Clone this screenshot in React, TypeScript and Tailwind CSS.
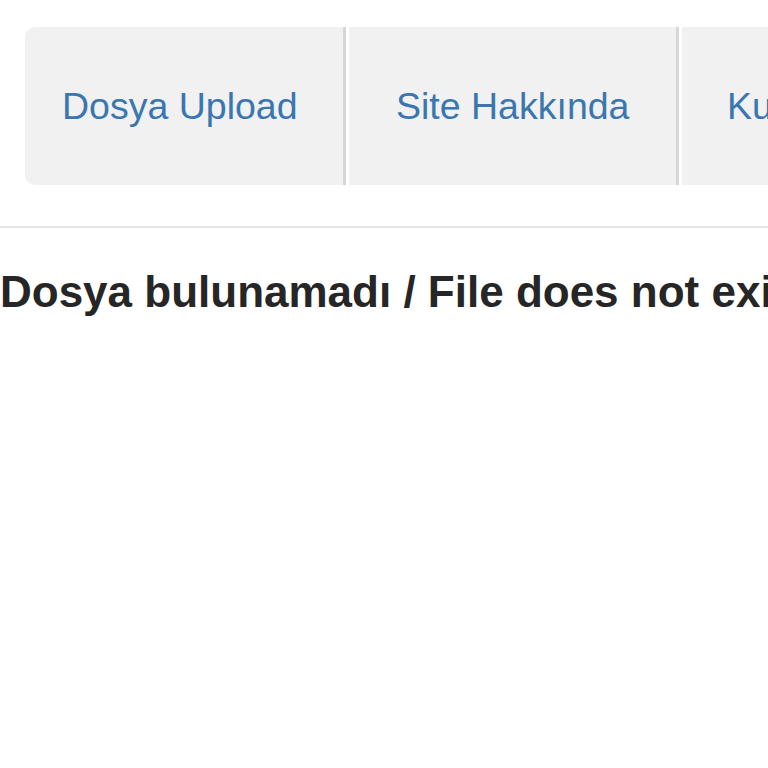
export default function App() {
  return (
    <div className="relative h-[768px] w-[768px] overflow-hidden bg-white font-['Liberation_Sans',Arial,sans-serif]">
      <nav className="flex h-[158px] pl-[25px] pt-[27px] box-content">
        <a className="flex w-[321px] shrink-0 items-center rounded-l-[10px] border-r-[3px] border-[#d6d6d6] bg-[#f1f1f1] pl-[37px] text-[37.5px] whitespace-nowrap text-[#3a76b0]">
          Dosya Upload
        </a>
        <a className="flex w-[333px] shrink-0 items-center border-x-[3px] border-l-white border-r-[#d6d6d6] bg-[#f1f1f1] pl-[47px] text-[37.5px] whitespace-nowrap text-[#3a76b0]">
          Site Hakkında
        </a>
        <a className="flex w-[400px] shrink-0 items-center border-l-[3px] border-white bg-[#f1f1f1] pl-[45px] text-[37.5px] whitespace-nowrap text-[#3a76b0]">
          Kullanım Koşulları
        </a>
      </nav>
      <hr className="mt-[41px] h-[2px] border-0 bg-[#e6e6e6]" />
      <h3 className="mt-[40px] whitespace-nowrap text-[44px] leading-[48px] font-bold text-[#262626]">
        Dosya bulunamadı / File does not exist
      </h3>
    </div>
  );
}
